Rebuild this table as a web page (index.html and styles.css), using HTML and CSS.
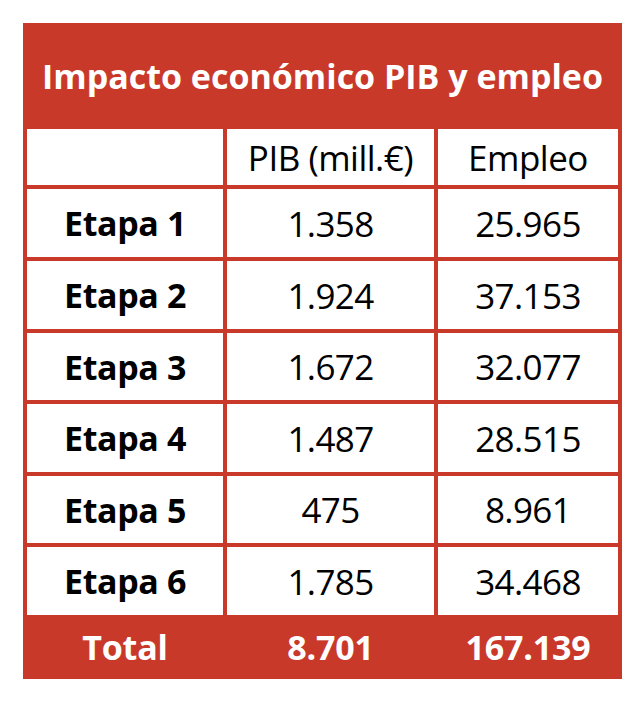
FILE: index.html
```html
<!DOCTYPE html>
<html lang="es">
<head>
<meta charset="utf-8">
<title>Impacto económico PIB y empleo</title>
<link rel="stylesheet" href="styles.css">
</head>
<body>
<div class="table">
  <div class="title">Impacto económico PIB y empleo</div>
  <div class="cell head"></div>
  <div class="cell head">PIB (mill.€)</div>
  <div class="cell head">Empleo</div>

  <div class="cell label">Etapa 1</div>
  <div class="cell">1.358</div>
  <div class="cell">25.965</div>

  <div class="cell label">Etapa 2</div>
  <div class="cell">1.924</div>
  <div class="cell">37.153</div>

  <div class="cell label">Etapa 3</div>
  <div class="cell">1.672</div>
  <div class="cell">32.077</div>

  <div class="cell label">Etapa 4</div>
  <div class="cell">1.487</div>
  <div class="cell">28.515</div>

  <div class="cell label">Etapa 5</div>
  <div class="cell">475</div>
  <div class="cell">8.961</div>

  <div class="cell label">Etapa 6</div>
  <div class="cell">1.785</div>
  <div class="cell">34.468</div>

  <div class="cell total">Total</div>
  <div class="cell total">8.701</div>
  <div class="cell total">167.139</div>
</div>
</body>
</html>
```
FILE: styles.css
```css
html, body {
  margin: 0;
  padding: 0;
  background: #ffffff;
}

body {
  font-family: "Open Sans", "Noto Sans", "Liberation Sans", sans-serif;
  color: #000000;
}

.table {
  margin: 23px 0 0 23px;
  width: 599px;
  box-sizing: border-box;
  padding: 0 4px;
  background: #c9392a;
  display: grid;
  grid-template-columns: 196px 207px 180px;
  grid-template-rows: 102px 56px 68px 68px 67px 68px 67px 68px 60px;
  gap: 4px;
}

.title {
  grid-column: 1 / -1;
  display: flex;
  align-items: center;
  justify-content: center;
  color: #ffffff;
  font-weight: 700;
  font-size: 34px;
  letter-spacing: 0;
  padding-top: 4px;
}

.cell {
  background: #ffffff;
  display: flex;
  align-items: center;
  justify-content: center;
  font-size: 35px;
  font-weight: 400;
  letter-spacing: -0.6px;
}

.head {
  font-size: 35px;
  letter-spacing: -0.5px;
}

.label {
  font-weight: 700;
  font-size: 34px;
  letter-spacing: -0.4px;
}

.total {
  background: #c9392a;
  color: #ffffff;
  font-weight: 700;
  font-size: 34px;
  letter-spacing: -0.2px;
  margin-top: -4px;
}
```
